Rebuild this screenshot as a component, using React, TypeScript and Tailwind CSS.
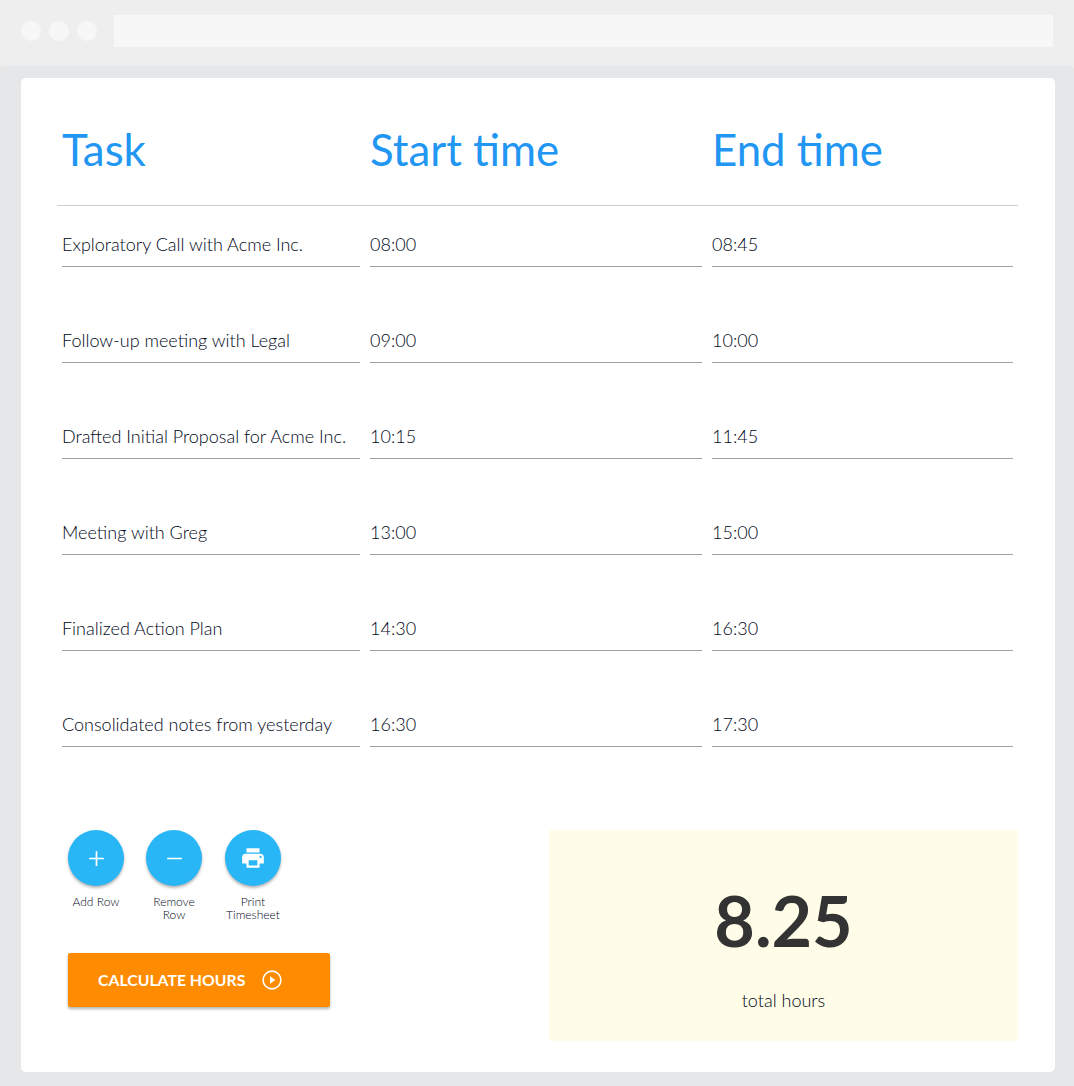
import { Plus, Minus } from "lucide-react";
import { MdPrint } from "react-icons/md";

const rows = [
  { task: "Exploratory Call with Acme Inc.", start: "08:00", end: "08:45" },
  { task: "Follow-up meeting with Legal", start: "09:00", end: "10:00" },
  { task: "Drafted Initial Proposal for Acme Inc.", start: "10:15", end: "11:45" },
  { task: "Meeting with Greg", start: "13:00", end: "15:00" },
  { task: "Finalized Action Plan", start: "14:30", end: "16:30" },
  { task: "Consolidated notes from yesterday", start: "16:30", end: "17:30" },
];

const Cell = ({ value }: { value: string }) => (
  <div className="h-[41px] border-b border-[#a3a3a3] pt-[5px] text-[18px] leading-[26px] font-light text-[#000820] whitespace-nowrap">
    {value}
  </div>
);

const RoundButton = ({
  label,
  className,
  children,
}: {
  label: React.ReactNode;
  className: string;
  children: React.ReactNode;
}) => (
  <div className={`flex flex-col items-center ${className}`}>
    <div className="flex h-14 w-14 items-center justify-center rounded-full bg-[#29b6f6] text-white shadow-[0_2px_3px_rgba(0,0,0,0.3)]">
      {children}
    </div>
    <div className="mt-[9px] text-center text-[12px] leading-[13px] font-light text-[#000820] whitespace-nowrap">
      {label}
    </div>
  </div>
);

export default function App() {
  return (
    <div className="h-[1086px] w-[1074px] overflow-hidden bg-[#eeeeee] font-['Lato','Open_Sans',sans-serif]">
      <div className="flex h-[66px] items-start pt-[15px] pl-[21px] pr-[21px]">
        <div className="mt-[6px] flex gap-2">
          <div className="h-5 w-5 rounded-full bg-[#f7f7f7]" />
          <div className="h-5 w-5 rounded-full bg-[#f7f7f7]" />
          <div className="h-5 w-5 rounded-full bg-[#f7f7f7]" />
        </div>
        <div className="ml-[17px] h-8 flex-1 bg-[#f7f7f7]" />
      </div>
      <div className="h-[1020px] rounded-t-[4px] bg-[#e6e7e8] px-[19px] pt-3 pl-[21px]">
        <div className="h-[994px] w-[1034px] rounded-[5px] bg-white pt-[44px]">
          <div className="ml-9 mr-[37px] flex h-[84px] border-b border-[#d0d0d0] pl-[5px] text-[43.8px] leading-[55px] font-normal text-[#2196f3]">
            <div className="w-[308px]">Task</div>
            <div className="w-[342px]">Start time</div>
            <div>End time</div>
          </div>
          <div className="ml-[41px] mt-[20px] flex w-[951px] flex-col gap-[55px]">
            {rows.map((row) => (
              <div key={row.task} className="grid grid-cols-[298px_332px_301px] gap-x-[10px]">
                <Cell value={row.task} />
                <Cell value={row.start} />
                <Cell value={row.end} />
              </div>
            ))}
          </div>
          <div className="mt-[83px] flex justify-between pl-[47px] pr-[37px]">
            <div>
              <div className="flex">
                <RoundButton label="Add Row" className="w-14">
                  <Plus size={23} strokeWidth={1.8} />
                </RoundButton>
                <RoundButton label={<>Remove<br />Row</>} className="ml-[22px] w-14">
                  <Minus size={23} strokeWidth={1.8} />
                </RoundButton>
                <RoundButton label={<>Print<br />Timesheet</>} className="ml-[23px] w-14">
                  <MdPrint size={26} />
                </RoundButton>
              </div>
              <div className="mt-[32px] flex h-[54px] w-[262px] items-center rounded-[2px] bg-[#ff8c00] pl-[30px] text-[15.8px] font-bold text-white shadow-[0_2px_3px_rgba(0,0,0,0.3)]">
                CALCULATE HOURS
                <svg className="ml-[17px]" width="20" height="20" viewBox="0 0 20 20" fill="none">
                  <circle cx="10" cy="10" r="8.9" stroke="white" strokeWidth="1.6" />
                  <path d="M8 6.2 L13.4 10 L8 13.8 Z" fill="white" />
                </svg>
              </div>
            </div>
            <div className="flex h-[211px] w-[469px] flex-col items-center bg-[#fffde7]">
              <div className="mt-[45px] text-[70px] leading-[90px] font-bold text-[#333333]">8.25</div>
              <div className="mt-[22px] text-[18px] leading-[26px] font-light text-[#000820]">total hours</div>
            </div>
          </div>
        </div>
      </div>
    </div>
  );
}
